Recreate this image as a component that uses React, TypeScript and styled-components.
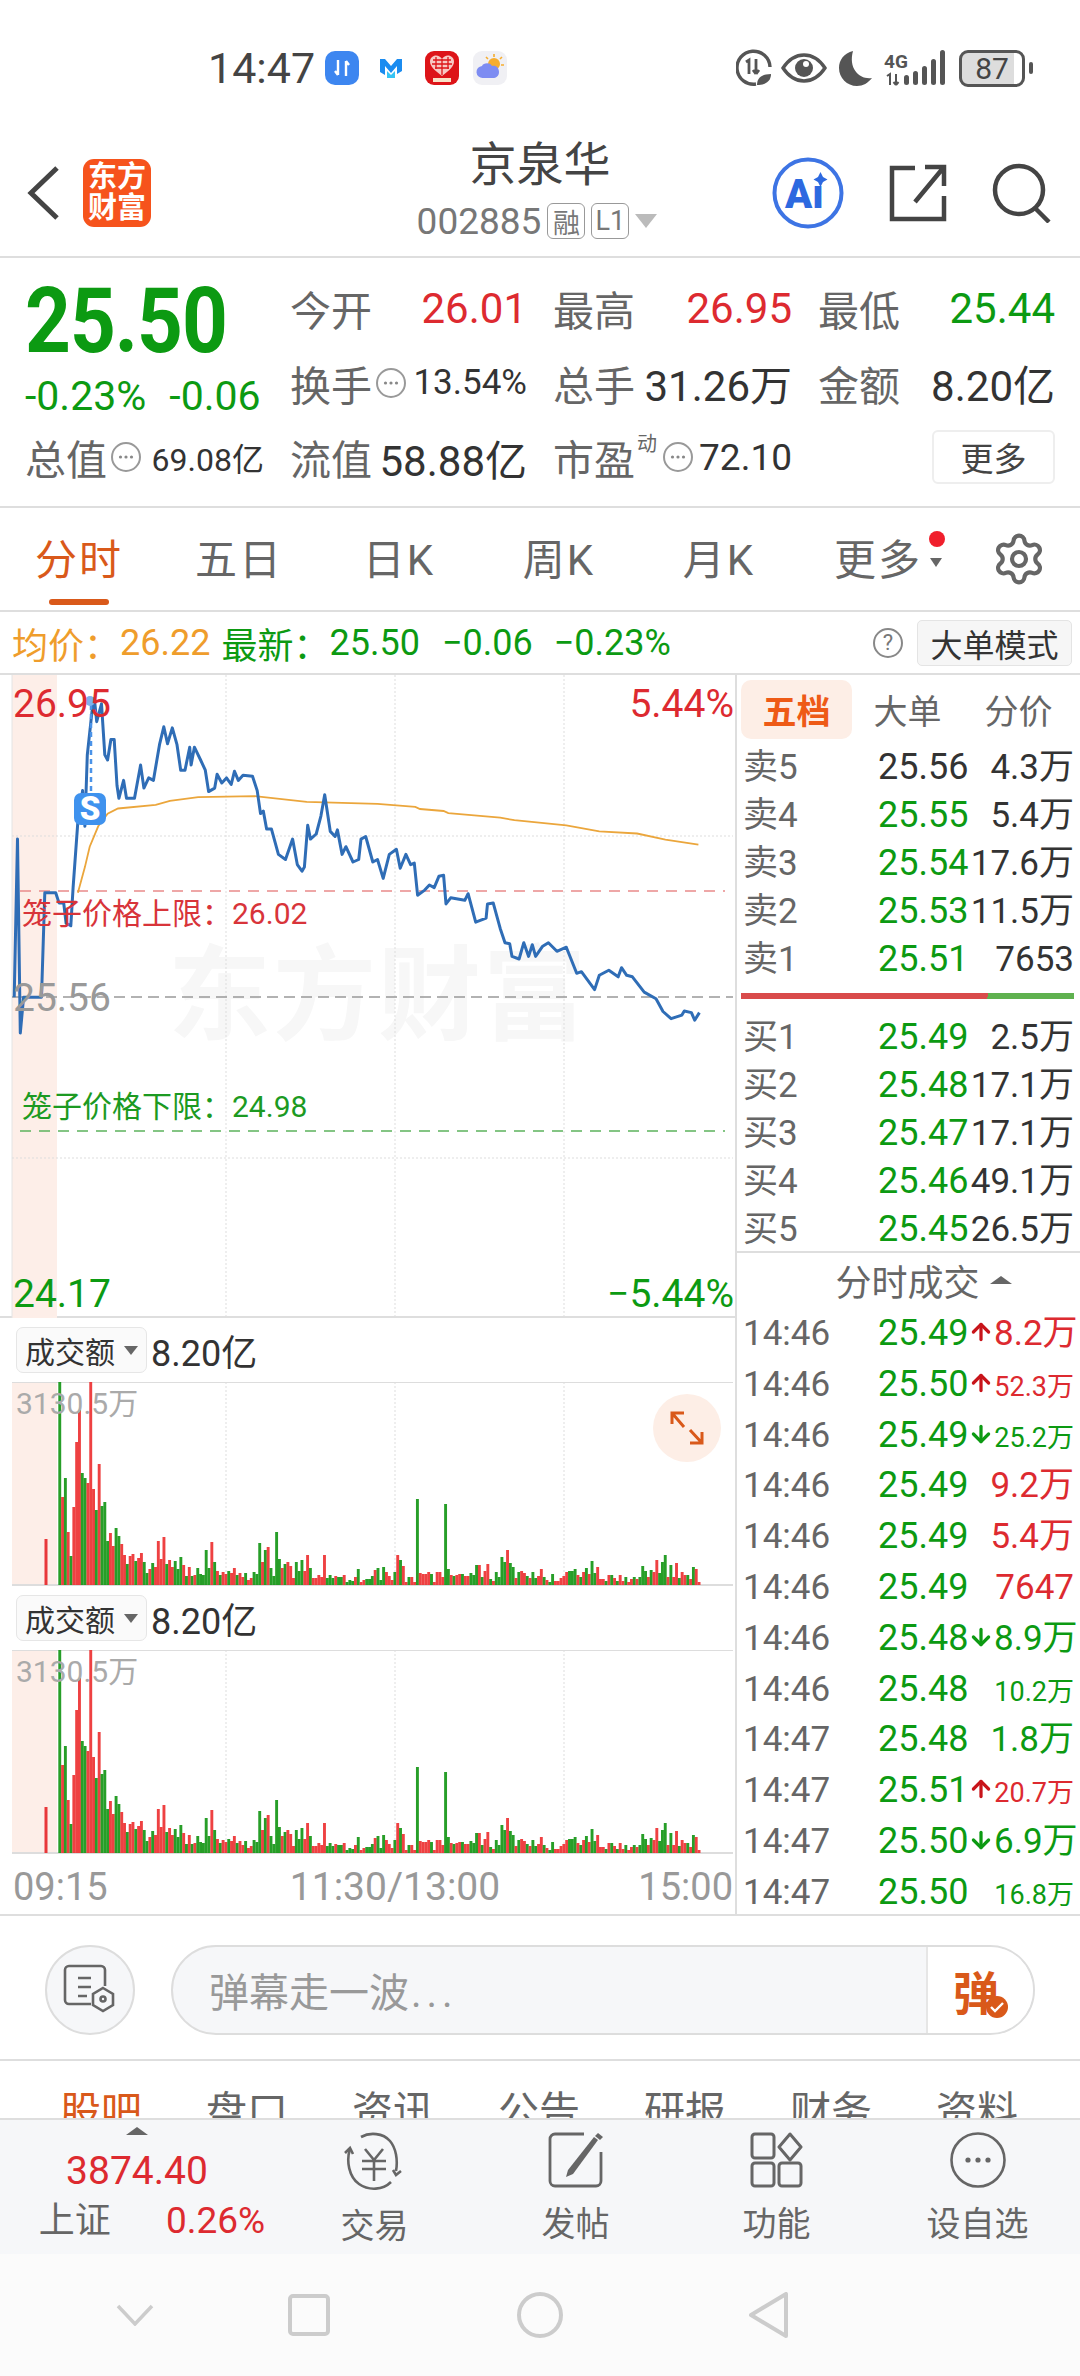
import React from 'react';
import styled, { createGlobalStyle } from 'styled-components';
import { ArrowUp, ArrowDown, Settings } from 'lucide-react';

const GREEN = '#0c9a12';
const RED = '#dd2a30';
const ORANGE = '#d9591a';
const LINE = '#dedede';
const FONT = 'Roboto, "Noto Sans CJK SC", sans-serif';

const GlobalStyle = createGlobalStyle`
  html, body { margin: 0; padding: 0; background: #fff; }
  body { font-family: ${FONT}; }
  * { box-sizing: border-box; }
`;

const Page = styled.div`
  width: 1080px;
  height: 2376px;
  overflow: hidden;
  display: flex;
  flex-direction: column;
  background: #fff;
  color: #333;
`;

/* status bar */
const StatusBar = styled.div`
  height: 130px;
  flex: none;
  padding: 6px 47px 0 208px;
  display: flex;
  align-items: center;
  justify-content: space-between;
`;
const StatusGroup = styled.div`
  display: flex;
  align-items: center;
  gap: 12px;
`;
const Clock = styled.span`
  font-size: 43px;
  color: #444;
  width: 105px;
`;
const BatteryBody = styled.div`
  width: 66px;
  height: 37px;
  border: 3px solid #555;
  border-radius: 9px;
  background: linear-gradient(90deg, #ddd 87%, #fff 87%);
  font-size: 30px;
  color: #444;
  display: flex;
  align-items: center;
  justify-content: center;
`;
const BatteryNub = styled.div`
  width: 4px;
  height: 12px;
  background: #555;
  border-radius: 2px;
  margin-left: -8px;
`;

/* header */
const Header = styled.header`
  height: 128px;
  flex: none;
  border-bottom: 2px solid ${LINE};
  display: grid;
  grid-template-columns: 350px 380px 350px;
  align-items: center;
`;
const HeaderLeft = styled.div`
  display: flex;
  align-items: center;
  gap: 23px;
  padding-left: 25px;
`;
const LogoBadge = styled.div`
  width: 68px;
  height: 68px;
  border-radius: 11px;
  background: #f6531c;
  color: #fff;
  font-size: 29px;
  font-weight: 700;
  line-height: 31px;
  text-align: center;
  padding-top: 3px;
`;
const TitleBlock = styled.div`
  display: flex;
  flex-direction: column;
  align-items: center;
`;
const StockName = styled.div`
  font-size: 47px;
  line-height: 56px;
  color: #444;
  margin-top: -8px;
`;
const CodeRow = styled.div`
  display: flex;
  align-items: center;
  gap: 6px;
  color: #777;
  font-size: 37px;
  height: 40px;
  margin-top: 8px;
  margin-left: -6px;
`;
const CodeTag = styled.span`
  width: 38px;
  height: 36px;
  border: 1px solid #999;
  border-radius: 6px;
  font-size: 27px;
  color: #777;
  display: flex;
  align-items: center;
  justify-content: center;
`;
const DownTriangle = styled.span<{ $size?: number; $color?: string }>`
  width: 0;
  height: 0;
  border-left: ${({ $size }) => $size ?? 10}px solid transparent;
  border-right: ${({ $size }) => $size ?? 10}px solid transparent;
  border-top: ${({ $size }) => ($size ?? 10) * 1.3}px solid ${({ $color }) => $color ?? '#bbb'};
`;
const UpTriangle = styled.span<{ $size?: number; $color?: string }>`
  display: block;
  width: 0;
  height: 0;
  border-left: ${({ $size }) => $size ?? 10}px solid transparent;
  border-right: ${({ $size }) => $size ?? 10}px solid transparent;
  border-bottom: ${({ $size }) => ($size ?? 10) * 0.8}px solid ${({ $color }) => $color ?? '#666'};
`;
const HeaderRight = styled.div`
  display: flex;
  align-items: center;
  justify-content: flex-end;
  gap: 45px;
  padding-right: 28px;
`;

/* quote */
const Quote = styled.section`
  height: 250px;
  flex: none;
  border-bottom: 2px solid ${LINE};
  padding: 13px 0 0 25px;
  display: grid;
  grid-template-columns: 265px 263px 265px 237px;
  grid-auto-rows: 74.5px;
`;
const BigPrice = styled.div`
  font-size: 80px;
  font-weight: 700;
  color: ${GREEN};
  line-height: 74px;
  margin-top: 12px;
  transform: scaleY(1.14);
  transform-origin: center;
  letter-spacing: -1px;
`;
const Changes = styled.div`
  display: flex;
  gap: 23px;
  color: ${GREEN};
  font-size: 41px;
  align-items: center;
  padding-top: 26px;
`;
const Cell = styled.div<{ $last?: boolean }>`
  display: flex;
  align-items: center;
  padding-right: ${({ $last }) => ($last ? 0 : 26)}px;
  font-size: 40px;
  color: #444;
`;
const CellLabel = styled.span`
  color: #666;
  font-size: 41px;
`;
const CellValue = styled.span<{ $color?: string; $size?: number }>`
  margin-left: auto;
  color: ${({ $color }) => $color ?? '#333'};
  font-size: ${({ $size }) => $size ?? 42}px;
  white-space: nowrap;
`;
const Super = styled.sup`
  font-size: 20px;
  color: #666;
  line-height: 1;
  margin: -26px 2px 0 2px;
`;
const MoreButton = styled.button`
  margin-left: auto;
  width: 123px;
  height: 54px;
  border: 2px solid #eee;
  border-radius: 6px;
  background: #fff;
  color: #444;
  font: 400 33px ${FONT};
  padding: 0;
`;

/* period tabs */
const PeriodTabs = styled.nav`
  height: 104px;
  flex: none;
  border-bottom: 2px solid ${LINE};
  display: grid;
  grid-template-columns: repeat(6, 160px) 1fr;
  margin-left: -1px;
  align-items: center;
`;
const PeriodTab = styled.div<{ $active?: boolean }>`
  position: relative;
  text-align: center;
  font-size: 42px;
  line-height: 60px;
  color: ${({ $active }) => ($active ? ORANGE : '#666')};
  letter-spacing: 2px;
  margin-top: 3px;
  ${({ $active }) =>
    $active &&
    `&::after {
      content: '';
      position: absolute;
      left: 50px;
      width: 60px;
      bottom: -14px;
      height: 6px;
      border-radius: 3px;
      background: ${ORANGE};
    }`}
`;
const MoreTab = styled(PeriodTab)`
  padding-right: 2px;
  &::before {
    content: '';
    position: absolute;
    right: 14px;
    top: 0;
    width: 16px;
    height: 16px;
    border-radius: 50%;
    background: #f01f2c;
  }
`;
const SmallDrop = styled.span`
  position: absolute;
  right: 17px;
  top: 27px;
  width: 0;
  height: 0;
  border-left: 6px solid transparent;
  border-right: 6px solid transparent;
  border-top: 9px solid #666;
`;
const GearSlot = styled.div`
  display: flex;
  justify-content: flex-end;
  padding-right: 33px;
  color: #666;
`;

/* summary row */
const InfoRow = styled.div`
  height: 63px;
  flex: none;
  border-bottom: 2px solid ${LINE};
  display: flex;
  align-items: center;
  padding: 0 8px 0 12px;
  font-size: 36px;
`;
const InfoText = styled.span<{ $color: string; $gap?: number }>`
  color: ${({ $color }) => $color};
  margin-right: ${({ $gap }) => $gap ?? 0}px;
  white-space: nowrap;
`;
const HelpMark = styled.span`
  margin-left: auto;
  width: 30px;
  height: 30px;
  border-radius: 50%;
  border: 2px solid #888;
  color: #777;
  font-size: 22px;
  display: flex;
  align-items: center;
  justify-content: center;
`;
const ModeButton = styled.div`
  margin-left: 14px;
  width: 155px;
  height: 46px;
  border: 1px solid #e4e4e4;
  border-radius: 5px;
  background: #f6f6f6;
  color: #333;
  font-size: 32px;
  display: flex;
  align-items: center;
  justify-content: center;
`;

/* main area */
const Main = styled.main`
  height: 1241px;
  flex: none;
  display: flex;
  border-bottom: 2px solid ${LINE};
  overflow: hidden;
`;
const ChartColumn = styled.div`
  width: 735px;
  flex: none;
  display: flex;
  flex-direction: column;
`;
const PricePanel = styled.div`
  position: relative;
  height: 643px;
  flex: none;
  border-bottom: 2px solid ${LINE};
`;
const ChartSvg = styled.svg`
  position: absolute;
  left: 0;
  top: 0;
  display: block;
`;
const Watermark = styled.div`
  position: absolute;
  left: 168px;
  top: 262px;
  font-size: 103px;
  font-weight: 700;
  color: #f7f7f7;
  white-space: nowrap;
  line-height: 120px;
  letter-spacing: 2px;
`;
const ChartLabel = styled.span<{ $color: string; $top: number; $left?: number; $right?: number; $size?: number }>`
  position: absolute;
  top: ${({ $top }) => $top}px;
  ${({ $left }) => ($left !== undefined ? `left: ${$left}px;` : '')}
  ${({ $right }) => ($right !== undefined ? `right: ${$right}px;` : '')}
  color: ${({ $color }) => $color};
  font-size: ${({ $size }) => $size ?? 39}px;
  line-height: 50px;
  white-space: nowrap;
`;
const SellBadge = styled.div`
  position: absolute;
  left: 74px;
  top: 118px;
  width: 32px;
  height: 32px;
  border-radius: 7px;
  background: #3f92ee;
  color: #fff;
  font-size: 33px;
  font-weight: 900;
  line-height: 32px;
  text-align: center;
`;
const VolumeHeader = styled.div`
  height: 64px;
  flex: none;
  display: flex;
  align-items: center;
  padding-left: 16px;
  gap: 4px;
`;
const VolumeSelect = styled.div`
  width: 131px;
  height: 46px;
  border: 1px solid #e6e6e6;
  border-radius: 7px;
  background: #fafafa;
  display: flex;
  align-items: center;
  justify-content: space-between;
  padding: 0 8px;
  font-size: 30px;
  color: #333;
`;
const VolumeTotal = styled.span`
  font-size: 36px;
  color: #333;
`;
const VolumeCanvas = styled.div`
  position: relative;
  height: 204px;
  flex: none;
`;
const ExpandButton = styled.div`
  position: absolute;
  left: 653px;
  top: 12px;
  width: 68px;
  height: 68px;
  border-radius: 50%;
  background: #fdeee6;
  display: flex;
  align-items: center;
  justify-content: center;
`;
const TimeAxis = styled.div`
  flex: 1;
  display: flex;
  align-items: center;
  justify-content: space-between;
  padding: 5px 2px 0 13px;
  font-size: 38px;
  color: #999;
`;
const AxisMiddle = styled.span`
  margin-left: 44px;
  font-size: 39px;
`;

/* side panel */
const SidePanel = styled.aside`
  flex: 1;
  border-left: 2px solid ${LINE};
  overflow: hidden;
`;
const SideTabs = styled.div`
  display: grid;
  grid-template-columns: 111px 111px 111px;
  margin: 5px 0 4px 4px;
  height: 59px;
`;
const SideTab = styled.div<{ $active?: boolean }>`
  display: flex;
  align-items: center;
  justify-content: center;
  font-size: 34px;
  font-weight: ${({ $active }) => ($active ? 700 : 400)};
  border-radius: 10px;
  color: ${({ $active }) => ($active ? '#ee5a16' : '#666')};
  background: ${({ $active }) => ($active ? '#fdeee6' : 'transparent')};
`;
const QuoteRow = styled.div<{ $height: number }>`
  display: grid;
  grid-template-columns: 135px 92px 1fr;
  align-items: baseline;
  height: ${({ $height }) => $height}px;
  padding: 4px 6px 0 6px;
  font-size: 36px;
  line-height: 40px;
  white-space: nowrap;
`;
const RowLabel = styled.span`
  color: #666;
  font-size: 35px;
`;
const RowPrice = styled.span<{ $dark?: boolean }>`
  color: ${({ $dark }) => ($dark ? '#333' : GREEN)};
`;
const RowVolume = styled.span<{ $color?: string; $small?: boolean }>`
  display: flex;
  align-items: baseline;
  justify-content: flex-end;
  color: ${({ $color }) => $color ?? '#333'};
  font-size: ${({ $small }) => ($small ? 27 : 35)}px;
  & > svg {
    margin-right: auto;
    margin-left: -2px;
  }
`;
const RatioBar = styled.div`
  height: 6px;
  margin: 10px 6px 14px 4px;
  background: linear-gradient(100deg, #d94b4b 74%, #5fb14f 74%);
`;
const TradesHeader = styled.div`
  height: 60px;
  margin-top: -2px;
  border-top: 2px solid ${LINE};
  display: flex;
  align-items: center;
  justify-content: center;
  gap: 10px;
  font-size: 36px;
  color: #666;
  padding: 0 0 5px 30px;
  margin-bottom: -2px;
`;

/* comment bar */
const CommentBar = styled.div`
  height: 145px;
  flex: none;
  border-bottom: 2px solid ${LINE};
  display: flex;
  align-items: center;
  padding: 4px 45px 0;
  gap: 36px;
`;
const RoundButton = styled.div`
  width: 90px;
  height: 90px;
  flex: none;
  border-radius: 50%;
  border: 2px solid #ddd;
  background: #f6f7f9;
  display: flex;
  align-items: center;
  justify-content: center;
`;
const CommentPill = styled.div`
  width: 864px;
  height: 90px;
  border-radius: 45px;
  border: 2px solid #ddd;
  background: #f6f7f9;
  display: flex;
  align-items: center;
  overflow: hidden;
`;
const CommentHint = styled.span`
  flex: 1;
  padding-left: 36px;
  color: #999;
  font-size: 40px;
`;
const HintDots = styled.span`
  letter-spacing: 5px;
  margin-left: 2px;
`;
const SendSlot = styled.div`
  position: relative;
  width: 107px;
  height: 100%;
  background: #fff;
  border-left: 2px solid #e6e6e6;
  color: ${ORANGE};
  font-size: 46px;
  font-weight: 700;
  padding-left: 25px;
  display: flex;
  align-items: center;
`;
const SendCheck = styled.svg`
  position: absolute;
  left: 57px;
  top: 48px;
`;

/* info tabs, cut off by the bottom bar */
const InfoTabs = styled.div`
  height: 57px;
  flex: none;
  overflow: hidden;
  display: grid;
  grid-template-columns: repeat(7, 146px);
  padding: 23px 0 0 28px;
`;
const InfoTab = styled.div<{ $active?: boolean }>`
  text-align: center;
  font-size: 41px;
  line-height: 56px;
  color: ${({ $active }) => ($active ? ORANGE : '#666')};
`;

/* bottom bar */
const BottomBar = styled.div`
  height: 136px;
  flex: none;
  background: #f6f7f9;
  border-top: 2px solid ${LINE};
  display: grid;
  grid-template-columns: 274px repeat(4, 201px);
`;
const IndexBlock = styled.div`
  display: flex;
  flex-direction: column;
  align-items: center;
  padding-top: 7px;
`;
const IndexValue = styled.div`
  color: ${RED};
  font-size: 39px;
  line-height: 46px;
  margin-top: 13px;
`;
const IndexRow = styled.div`
  display: flex;
  align-items: center;
  gap: 55px;
  margin: 4px 0 0 30px;
  line-height: 46px;
  white-space: nowrap;
`;
const IndexName = styled.span`
  color: #666;
  font-size: 36px;
`;
const IndexChange = styled.span`
  color: ${RED};
  font-size: 37px;
`;
const BarItem = styled.div`
  display: flex;
  flex-direction: column;
  align-items: center;
  padding-top: 12px;
  color: #666;
  font-size: 34px;
`;
const BarLabel = styled.span`
  line-height: 44px;
  margin-top: 14px;
`;

/* system navigation */
const SystemNav = styled.div`
  flex: 1;
  background: #fbfbfb;
  display: grid;
  grid-template-columns: 270px 78px 384px 74px;
  align-items: center;
  justify-items: center;
`;

const toPoints = (raw: number[], top: number) => {
  const out: string[] = [];
  for (let i = 0; i < raw.length; i += 2) {
    out.push(`${(raw[i] / 2.119).toFixed(1)},${(raw[i + 1] / 1.96 + 510 - top).toFixed(1)}`);
  }
  return out.join(' ');
};

const PRICE_LINE = [
  30, 955, 37, 645, 43, 1025, 50, 955, 88, 955, 95, 750, 118, 750, 125, 770, 135, 770, 140, 810, 150, 815, 155, 740,
  165, 610, 175, 550, 180, 620, 185, 480, 195, 395, 200, 370, 205, 415, 215, 380, 222, 480, 228, 490, 235, 450, 242,
  450, 248, 540, 252, 565, 262, 530, 268, 565, 285, 565, 298, 500, 305, 545, 315, 525, 325, 530, 338, 460, 347, 425,
  355, 458, 365, 427, 375, 460, 383, 510, 392, 510, 402, 465, 405, 500, 412, 465, 425, 490, 435, 510, 442, 552, 455,
  545, 460, 518, 470, 535, 480, 525, 490, 538, 497, 512, 505, 530, 515, 520, 535, 522, 545, 550, 552, 595, 558, 590,
  565, 625, 575, 625, 590, 675, 605, 685, 620, 645, 630, 695, 640, 708, 645, 700, 652, 618, 658, 645, 670, 635, 680,
  600, 688, 558, 700, 630, 710, 640, 715, 627, 725, 675, 733, 660, 748, 690, 760, 685, 765, 645, 775, 640, 790, 690,
  800, 685, 812, 722, 825, 675, 840, 665, 848, 702, 860, 675, 870, 695, 878, 692, 885, 755, 900, 745, 910, 735, 920,
  740, 930, 718, 940, 716, 945, 772, 955, 760, 985, 765, 992, 752, 1008, 808, 1030, 800, 1033, 772, 1045, 770, 1060,
  820, 1070, 848, 1080, 850, 1085, 875, 1100, 880, 1110, 848, 1120, 875, 1128, 852, 1135, 875, 1150, 855, 1162, 848,
  1180, 865, 1200, 857, 1222, 908, 1232, 905, 1260, 940, 1270, 912, 1290, 902, 1310, 915, 1317, 897, 1328, 912, 1340,
  915, 1365, 945, 1390, 958, 1405, 983, 1422, 997, 1445, 990, 1450, 982, 1465, 985, 1472, 1000, 1482, 985,
];

const AVERAGE_LINE = [
  165, 750, 180, 700, 190, 660, 208, 620, 228, 595, 250, 585, 330, 578, 360, 570, 420, 563, 540, 561, 650, 572, 800,
  576, 880, 582, 890, 586, 940, 590, 950, 594, 1060, 603, 1090, 608, 1200, 618, 1270, 630, 1350, 634, 1410, 646, 1480,
  656,
];

// 柱高（像素），负数为绿柱
const VOLUMES = [
  -203, 88, -107, 53, -29, 78, 143, 175, -112, -107, 102, 203, 96, -75, 121, -79, -83, -44, 52, 39, -57, -49, 41, 30,
  -21, 29, 31, -24, 27, 32, -23, -12, 16, -22, 18, 44, 26, 48, -21, 25, 18, -24, -16, -28, 20, -9, 18, -9, 10, -17,
  -11, -10, -35, -17, 43, -23, 14, -10, 13, 11, -14, 12, 17, -10, 12, 8, -12, 5, 7, -13, -11, -42, 23, -35, 38, -17,
  -9, -53, -26, 17, -21, 23, 19, 7, -23, -14, -25, 14, 30, -17, 7, 7, 10, 8, 30, -7, -10, -7, 9, -8, -8, 10, -3, -5,
  -4, 8, -16, 3, 5, -6, -6, -9, 15, -17, -5, -18, 13, 9, 5, -13, 30, -25, 19, 3, -8, 8, 3, -86, 12, 11, 11, 13, -11,
  3, 13, 13, 8, -81, -16, 10, -9, 10, 11, -11, 9, 9, -12, -10, -20, 20, -8, 14, 21, -6, 4, -13, -8, -28, -23, 35, -22,
  -18, 7, -13, 14, 12, -9, 7, -13, -7, 9, 16, -8, 5, -3, -11, 4, 4, 7, 9, 13, -14, -14, -16, 10, -8, 13, -17, 11, -24,
  -12, 18, 6, 6, -4, 10, -10, 7, -4, 10, 4, -8, 3, 6, -8, 6, -8, -19, -14, 8, -15, 13, 25, -12, -23, -30, 8, -20, 8,
  22, -7, 13, 10, -10, 6, -18, 16, 3,
];

const SELLS = [
  { label: '卖5', price: '25.56', vol: '4.3万', dark: true },
  { label: '卖4', price: '25.55', vol: '5.4万' },
  { label: '卖3', price: '25.54', vol: '17.6万' },
  { label: '卖2', price: '25.53', vol: '11.5万' },
  { label: '卖1', price: '25.51', vol: '7653' },
];
const BUYS = [
  { label: '买1', price: '25.49', vol: '2.5万' },
  { label: '买2', price: '25.48', vol: '17.1万' },
  { label: '买3', price: '25.47', vol: '17.1万' },
  { label: '买4', price: '25.46', vol: '49.1万' },
  { label: '买5', price: '25.45', vol: '26.5万' },
];
type Trade = { time: string; price: string; vol: string; up: boolean; arrow?: boolean; small?: boolean };
const TRADES: Trade[] = [
  { time: '14:46', price: '25.49', vol: '8.2万', up: true, arrow: true },
  { time: '14:46', price: '25.50', vol: '52.3万', up: true, arrow: true, small: true },
  { time: '14:46', price: '25.49', vol: '25.2万', up: false, arrow: true, small: true },
  { time: '14:46', price: '25.49', vol: '9.2万', up: true },
  { time: '14:46', price: '25.49', vol: '5.4万', up: true },
  { time: '14:46', price: '25.49', vol: '7647', up: true },
  { time: '14:46', price: '25.48', vol: '8.9万', up: false, arrow: true },
  { time: '14:46', price: '25.48', vol: '10.2万', up: false, small: true },
  { time: '14:47', price: '25.48', vol: '1.8万', up: false },
  { time: '14:47', price: '25.51', vol: '20.7万', up: true, arrow: true, small: true },
  { time: '14:47', price: '25.50', vol: '6.9万', up: false, arrow: true },
  { time: '14:47', price: '25.50', vol: '16.8万', up: false, small: true },
];

const InfoDot = () => (
  <svg width="32" height="32" viewBox="0 0 32 32" style={{ marginLeft: 3, flex: 'none' }}>
    <circle cx="16" cy="16" r="14" fill="none" stroke="#999" strokeWidth="2" />
    <circle cx="10.5" cy="16" r="1.6" fill="#888" />
    <circle cx="16" cy="16" r="1.6" fill="#888" />
    <circle cx="21.5" cy="16" r="1.6" fill="#888" />
  </svg>
);

const StatusLeftIcons = () => (
  <>
    <svg width="34" height="34" viewBox="0 0 34 34">
      <rect width="34" height="34" rx="10" fill="#3d86f0" />
      <path d="M13 9v15M13 24l-3-4M21 25V10M21 10l3 4" stroke="#fff" strokeWidth="2.4" fill="none" />
    </svg>
    <svg width="22" height="20" viewBox="0 0 22 20" style={{ margin: '0 9px' }}>
      <path d="M0 1h5l6 7 6-7h5v12l-5 3V8l-6 7-6-7v9l-5-3z" fill="#1b8cf0" />
      <path d="M7 13l4 4 4-4v7H7z" fill="#35c4f5" />
    </svg>
    <svg width="34" height="34" viewBox="0 0 34 34" style={{ marginLeft: 2 }}>
      <rect width="34" height="34" rx="9" fill="#dd1418" />
      <path d="M17 25C9 19 5 15 5 10.500 5 7 8 4.500 11 4.500c2.500 0 4.500 1.200 6 3.500 1.500-2.300 3.500-3.500 6-3.500 3 0 6 2.500 6 6C29 15 25 19 17 25z" fill="#f7c9c4" />
      <path d="M8 9h18M7 13h20M10 17h14M11 6v12M17 8v16M23 6v12" stroke="#dd1418" strokeWidth="1.300" />
      <rect x="8" y="27" width="18" height="4" fill="#f8e2c8" />
    </svg>
    <svg width="34" height="34" viewBox="0 0 34 34" style={{ marginLeft: 2 }}>
      <rect width="34" height="34" rx="9" fill="#f0f0f4" />
      <circle cx="21" cy="13" r="6" fill="#f6ad2e" />
      <path d="M21 3v3M29 6l-2 2M13 6l2 2M31 14h-3" stroke="#f6ad2e" strokeWidth="1.600" />
      <path d="M10 27a6 6 0 0 1-1-12c1-3 8-4 10 0 4-1 7 2 7 6s-3 6-6 6z" fill="#7d8cf2" />
    </svg>
  </>
);

const StatusRightIcons = () => (
  <>
    <svg width="36" height="38" viewBox="0 0 36 38" style={{ marginRight: -3 }}>
      <path d="M20 35A16.500 16.500 0 1 1 34 18" fill="none" stroke="#555" strokeWidth="3.400" />
      <path d="M10 13l3-2v14M20 10v15M20 25l-3-4M20 25l3-4" fill="none" stroke="#555" strokeWidth="2.800" />
      <path d="M21 36c0-7 5-11 14-11 0 7-5 11-14 11z" fill="#555" />
    </svg>
    <svg width="46" height="32" viewBox="0 0 46 32">
      <path d="M2 16C8 7 15 3 23 3s15 4 21 13c-6 9-13 13-21 13S8 25 2 16z" fill="none" stroke="#555" strokeWidth="3.400" />
      <circle cx="23" cy="16" r="9" fill="#555" />
      <circle cx="25" cy="12" r="3" fill="#fff" />
    </svg>
    <svg width="33" height="36" viewBox="0 0 33 36">
      <path d="M14 1C5 3 0 10 0 18c0 10 8 18 18 18 6 0 11-3 15-8-12 2-24-9-19-27z" fill="#555" />
    </svg>
    <svg width="63" height="36" viewBox="0 0 63 36">
      <text x="0" y="18" fontSize="19" fontWeight="700" fill="#555" fontFamily="Roboto, sans-serif">4G</text>
      <path d="M3 26l3-2v11M12 24v11M12 35l-2.500-3M12 35l2.500-3" stroke="#555" strokeWidth="2" fill="none" />
      <rect x="20" y="25" width="5" height="10" rx="2.500" fill="#555" />
      <rect x="29" y="21" width="5" height="14" rx="2.500" fill="#555" />
      <rect x="38" y="16" width="5" height="19" rx="2.500" fill="#555" />
      <rect x="47" y="9" width="5" height="26" rx="2.500" fill="#555" />
      <rect x="56" y="0" width="5" height="35" rx="2.500" fill="#555" />
    </svg>
    <BatteryBody>87</BatteryBody>
    <BatteryNub />
  </>
);

const ExchangeIcon = () => (
  <svg width="64" height="58" viewBox="0 0 64 58" fill="none" stroke="#666" strokeWidth="2.600">
    <path d="M18 5C27 0 40 1 47 9c6 7 8 19 6 30" />
    <path d="M48 50c-8 8-22 9-32 2C6 45 3 29 7 17" />
    <path d="M2 21l5-5 3 6M50 38l3 5 5-4" />
    <path d="M22 17l9 11 9-11M19 29h24M19 37h24M31 28v21" />
  </svg>
);
const PostIcon = () => (
  <svg width="56" height="56" viewBox="0 0 56 56" fill="none" stroke="#666" strokeWidth="2.800">
    <path d="M36 2H7a5 5 0 0 0-5 5v42a5 5 0 0 0 5 5h41a5 5 0 0 0 5-5V20" />
    <path d="M20 38L46 5l4 3-25 34-7 3z" fill="#666" stroke="none" />
    <path d="M47 4l3-3 5 4-3 3z" fill="#666" stroke="none" />
  </svg>
);
const AppsIcon = () => (
  <svg width="54" height="56" viewBox="0 0 54 56" fill="none" stroke="#666" strokeWidth="3">
    <rect x="2" y="2" width="22" height="24" rx="3" />
    <rect x="2" y="31" width="22" height="23" rx="3" />
    <rect x="29" y="31" width="22" height="23" rx="3" />
    <path d="M40 2l11 13-11 13-11-13z" strokeLinejoin="round" />
  </svg>
);
const MoreIcon = () => (
  <svg width="56" height="56" viewBox="0 0 56 56">
    <circle cx="28" cy="28" r="26.500" fill="none" stroke="#666" strokeWidth="2.600" />
    <circle cx="18" cy="28" r="2.600" fill="#666" />
    <circle cx="28" cy="28" r="2.600" fill="#666" />
    <circle cx="38" cy="28" r="2.600" fill="#666" />
  </svg>
);

const PriceChart = () => (
  <PricePanel>
    <Watermark>东方财富</Watermark>
    <ChartSvg width="735" height="643" viewBox="0 0 735 643">
      <rect x="12" y="0" width="45" height="643" fill="#fdeee8" />
      <line x1="12" y1="0" x2="12" y2="643" stroke="#e4e4e4" />
      {[226, 395, 564].map((x) => (
        <line key={x} x1={x} y1="0" x2={x} y2="643" stroke="#ddd" strokeDasharray="2 2" />
      ))}
      {[161, 483].map((y) => (
        <line key={y} x1="12" y1={y} x2="733" y2={y} stroke="#ddd" strokeDasharray="2 2" />
      ))}
      <line x1="20" y1="216" x2="725" y2="216" stroke="#e98a8a" strokeWidth="1.500" strokeDasharray="11 8" />
      <line x1="20" y1="456" x2="725" y2="456" stroke="#5cb35c" strokeWidth="1.500" strokeDasharray="11 8" />
      <line x1="12" y1="322" x2="733" y2="322" stroke="#999" strokeWidth="1.500" strokeDasharray="11 6" />
      <polyline points={toPoints(AVERAGE_LINE, 675)} fill="none" stroke="#eba63c" strokeWidth="1.800" />
      <polyline points={toPoints(PRICE_LINE, 675)} fill="none" stroke="#2f6db6" strokeWidth="3" strokeLinejoin="round" />
      <line x1="91" y1="30" x2="91" y2="118" stroke="#4b93e8" strokeWidth="2.500" strokeDasharray="5 4" />
      <circle cx="90" cy="26" r="5" fill="#7fb0ea" />
    </ChartSvg>
    <ChartLabel $color={RED} $top={4} $left={13}>26.95</ChartLabel>
    <ChartLabel $color={RED} $top={4} $right={1}>5.44%</ChartLabel>
    <ChartLabel $color="#999" $top={298} $left={13}>25.56</ChartLabel>
    <ChartLabel $color={GREEN} $top={594} $left={13}>24.17</ChartLabel>
    <ChartLabel $color={GREEN} $top={594} $right={1}>−5.44%</ChartLabel>
    <ChartLabel $color="#d8343a" $top={214} $left={22} $size={30}>笼子价格上限：26.02</ChartLabel>
    <ChartLabel $color="#1c9a22" $top={407} $left={22} $size={30}>笼子价格下限：24.98</ChartLabel>
    <SellBadge>S</SellBadge>
  </PricePanel>
);

const VolumePanel = ({ expand }: { expand?: boolean }) => {
  const pitch = (699 - 59.7) / (VOLUMES.length - 1);
  return (
    <>
      <VolumeHeader>
        <VolumeSelect>
          成交额
          <DownTriangle $size={7} $color="#666" />
        </VolumeSelect>
        <VolumeTotal>8.20亿</VolumeTotal>
      </VolumeHeader>
      <VolumeCanvas>
        <ChartSvg width="735" height="204" viewBox="0 0 735 204">
          <rect x="12" y="0" width="45" height="204" fill="#fdeee8" />
          <line x1="12" y1="0.500" x2="733" y2="0.500" stroke="#ddd" />
          <line x1="12" y1="203" x2="733" y2="203" stroke="#ddd" strokeWidth="2" />
          {[226, 395, 564].map((x) => (
            <line key={x} x1={x} y1="0" x2={x} y2="204" stroke="#ddd" strokeDasharray="2 2" />
          ))}
          <rect x="44.500" y="157" width="3" height="46" fill="#e8373a" />
          {VOLUMES.map((v, i) => (
            <rect
              key={i}
              x={(58.3 + i * pitch).toFixed(2)}
              y={203 - Math.abs(v)}
              width="2.900"
              height={Math.abs(v)}
              fill={v > 0 ? '#ec2c2e' : '#0f9411'}
              fillOpacity="0.9"
            />
          ))}
        </ChartSvg>
        <ChartLabel $color="#aaa" $top={-3} $left={16} $size={30}>3130.5万</ChartLabel>
        {expand && (
          <ExpandButton>
            <svg width="36" height="36" viewBox="0 0 36 36" fill="none" stroke={ORANGE} strokeWidth="3">
              <path d="M3 14V3h12M3 3l12 14M33 22v11H21M33 33L21 20" />
            </svg>
          </ExpandButton>
        )}
      </VolumeCanvas>
    </>
  );
};

const App: React.FC = () => (
  <Page>
    <GlobalStyle />
    <StatusBar>
      <StatusGroup>
        <Clock>14:47</Clock>
        <StatusLeftIcons />
      </StatusGroup>
      <StatusGroup>
        <StatusRightIcons />
      </StatusGroup>
    </StatusBar>

    <Header>
      <HeaderLeft>
        <svg width="35" height="54" viewBox="0 0 35 54" fill="none" stroke="#444" strokeWidth="5">
          <path d="M32 2L6 27l26 25" />
        </svg>
        <LogoBadge>
          东方
          <br />
          财富
        </LogoBadge>
      </HeaderLeft>
      <TitleBlock>
        <StockName>京泉华</StockName>
        <CodeRow>
          002885
          <CodeTag>融</CodeTag>
          <CodeTag>L1</CodeTag>
          <DownTriangle $size={11} />
        </CodeRow>
      </TitleBlock>
      <HeaderRight>
        <svg width="72" height="72" viewBox="0 0 72 72">
          <circle cx="36" cy="36" r="33.500" fill="none" stroke="#3d74e4" strokeWidth="4" />
          <text x="13" y="51" fontSize="40" fontWeight="900" fontFamily="Roboto, sans-serif" fill="#2d69e0">Aı</text>
          <path d="M48.500 15l2.500 5 4.500 2.500-4.500 2.500-2.500 5-2.500-5-4.500-2.500 4.500-2.500z" fill="#2d69e0" />
        </svg>
        <svg width="58" height="58" viewBox="0 0 58 58" fill="none" stroke="#444" strokeWidth="4.500">
          <path d="M26 4H3v51h52V32" />
          <path d="M36 3h19v19M55 3L26 38" />
        </svg>
        <svg width="60" height="60" viewBox="0 0 60 60" fill="none" stroke="#444" strokeWidth="4.500">
          <circle cx="27" cy="27" r="24" />
          <path d="M43 45l14 14" />
        </svg>
      </HeaderRight>
    </Header>

    <Quote>
      <BigPrice>25.50</BigPrice>
      <Cell>
        <CellLabel>今开</CellLabel>
        <CellValue $color={RED}>26.01</CellValue>
      </Cell>
      <Cell>
        <CellLabel>最高</CellLabel>
        <CellValue $color={RED}>26.95</CellValue>
      </Cell>
      <Cell $last>
        <CellLabel>最低</CellLabel>
        <CellValue $color={GREEN}>25.44</CellValue>
      </Cell>
      <Changes>
        <span>-0.23%</span>
        <span>-0.06</span>
      </Changes>
      <Cell>
        <CellLabel>换手</CellLabel>
        <InfoDot />
        <CellValue $size={35}>13.54%</CellValue>
      </Cell>
      <Cell>
        <CellLabel>总手</CellLabel>
        <CellValue>31.26万</CellValue>
      </Cell>
      <Cell $last>
        <CellLabel>金额</CellLabel>
        <CellValue>8.20亿</CellValue>
      </Cell>
      <Cell>
        <CellLabel>总值</CellLabel>
        <InfoDot />
        <CellValue $size={32}>69.08亿</CellValue>
      </Cell>
      <Cell>
        <CellLabel>流值</CellLabel>
        <CellValue>58.88亿</CellValue>
      </Cell>
      <Cell>
        <CellLabel>市盈</CellLabel>
        <Super>动</Super>
        <InfoDot />
        <CellValue $size={37}>72.10</CellValue>
      </Cell>
      <Cell $last>
        <MoreButton>更多</MoreButton>
      </Cell>
    </Quote>

    <PeriodTabs>
      <PeriodTab $active>分时</PeriodTab>
      <PeriodTab>五日</PeriodTab>
      <PeriodTab>日K</PeriodTab>
      <PeriodTab>周K</PeriodTab>
      <PeriodTab>月K</PeriodTab>
      <MoreTab>
        更多
        <SmallDrop />
      </MoreTab>
      <GearSlot>
        <Settings size={56} strokeWidth={1.8} />
      </GearSlot>
    </PeriodTabs>

    <InfoRow>
      <InfoText $color="#ef9d2c">均价：</InfoText>
      <InfoText $color="#ef9d2c" $gap={11}>26.22</InfoText>
      <InfoText $color={GREEN}>最新：</InfoText>
      <InfoText $color={GREEN} $gap={22}>25.50</InfoText>
      <InfoText $color={GREEN} $gap={21}>−0.06</InfoText>
      <InfoText $color={GREEN}>−0.23%</InfoText>
      <HelpMark>?</HelpMark>
      <ModeButton>大单模式</ModeButton>
    </InfoRow>

    <Main>
      <ChartColumn>
        <PriceChart />
        <VolumePanel expand />
        <VolumePanel />
        <TimeAxis>
          <span>09:15</span>
          <AxisMiddle>11:30/13:00</AxisMiddle>
          <span>15:00</span>
        </TimeAxis>
      </ChartColumn>
      <SidePanel>
        <SideTabs>
          <SideTab $active>五档</SideTab>
          <SideTab>大单</SideTab>
          <SideTab>分价</SideTab>
        </SideTabs>
        {SELLS.map((r) => (
          <QuoteRow key={r.label} $height={48}>
            <RowLabel>{r.label}</RowLabel>
            <RowPrice $dark={r.dark}>{r.price}</RowPrice>
            <RowVolume>{r.vol}</RowVolume>
          </QuoteRow>
        ))}
        <RatioBar />
        {BUYS.map((r) => (
          <QuoteRow key={r.label} $height={48}>
            <RowLabel>{r.label}</RowLabel>
            <RowPrice>{r.price}</RowPrice>
            <RowVolume>{r.vol}</RowVolume>
          </QuoteRow>
        ))}
        <TradesHeader>
          分时成交
          <UpTriangle $size={11} />
        </TradesHeader>
        {TRADES.map((t, i) => (
          <QuoteRow key={i} $height={50.8}>
            <RowLabel>{t.time}</RowLabel>
            <RowPrice>{t.price}</RowPrice>
            <RowVolume $color={t.up ? RED : GREEN} $small={t.small}>
              {t.arrow && (t.up ? <ArrowUp size={26} strokeWidth={3} color="#c8141a" /> : <ArrowDown size={26} strokeWidth={3} color={GREEN} />)}
              {t.vol}
            </RowVolume>
          </QuoteRow>
        ))}
      </SidePanel>
    </Main>

    <CommentBar>
      <RoundButton>
        <svg width="54" height="52" viewBox="0 0 54 52" fill="none" stroke="#666" strokeWidth="2.600">
          <path d="M42 22V6a4 4 0 0 0-4-4H6a4 4 0 0 0-4 4v30a4 4 0 0 0 4 4h22" />
          <path d="M15 14h13M15 23h13M15 32h9" />
          <path d="M40 24l10 6v11l-10 6-10-6V30z" />
          <circle cx="40" cy="35" r="2.500" />
        </svg>
      </RoundButton>
      <CommentPill>
        <CommentHint>
          弹幕走一波
          <HintDots>...</HintDots>
        </CommentHint>
        <SendSlot>
          弹
          <SendCheck width="24" height="24" viewBox="0 0 24 24">
            <circle cx="12" cy="12" r="11" fill={ORANGE} />
            <path d="M6 12l4 4 8-8" stroke="#fff" strokeWidth="2.400" fill="none" />
          </SendCheck>
        </SendSlot>
      </CommentPill>
    </CommentBar>

    <InfoTabs>
      <InfoTab $active>股吧</InfoTab>
      <InfoTab>盘口</InfoTab>
      <InfoTab>资讯</InfoTab>
      <InfoTab>公告</InfoTab>
      <InfoTab>研报</InfoTab>
      <InfoTab>财务</InfoTab>
      <InfoTab>资料</InfoTab>
    </InfoTabs>

    <BottomBar>
      <IndexBlock>
        <UpTriangle $size={11} />
        <IndexValue>3874.40</IndexValue>
        <IndexRow>
          <IndexName>上证</IndexName>
          <IndexChange>0.26%</IndexChange>
        </IndexRow>
      </IndexBlock>
      <BarItem>
        <ExchangeIcon />
        <BarLabel>交易</BarLabel>
      </BarItem>
      <BarItem>
        <PostIcon />
        <BarLabel>发帖</BarLabel>
      </BarItem>
      <BarItem>
        <AppsIcon />
        <BarLabel>功能</BarLabel>
      </BarItem>
      <BarItem>
        <MoreIcon />
        <BarLabel>设自选</BarLabel>
      </BarItem>
    </BottomBar>

    <SystemNav>
      <svg width="38" height="22" viewBox="0 0 38 22" fill="none" stroke="#ccc" strokeWidth="3.500">
        <path d="M2 2l17 18L36 2" />
      </svg>
      <svg width="42" height="42" viewBox="0 0 42 42" fill="none" stroke="#ccc" strokeWidth="4">
        <rect x="2" y="2" width="38" height="38" rx="3" />
      </svg>
      <svg width="46" height="46" viewBox="0 0 46 46" fill="none" stroke="#ccc" strokeWidth="4">
        <circle cx="23" cy="23" r="21" />
      </svg>
      <svg width="40" height="46" viewBox="0 0 40 46" fill="none" stroke="#ccc" strokeWidth="4" strokeLinejoin="round">
        <path d="M37 2v42L2 23z" />
      </svg>
    </SystemNav>
  </Page>
);

export default App;
